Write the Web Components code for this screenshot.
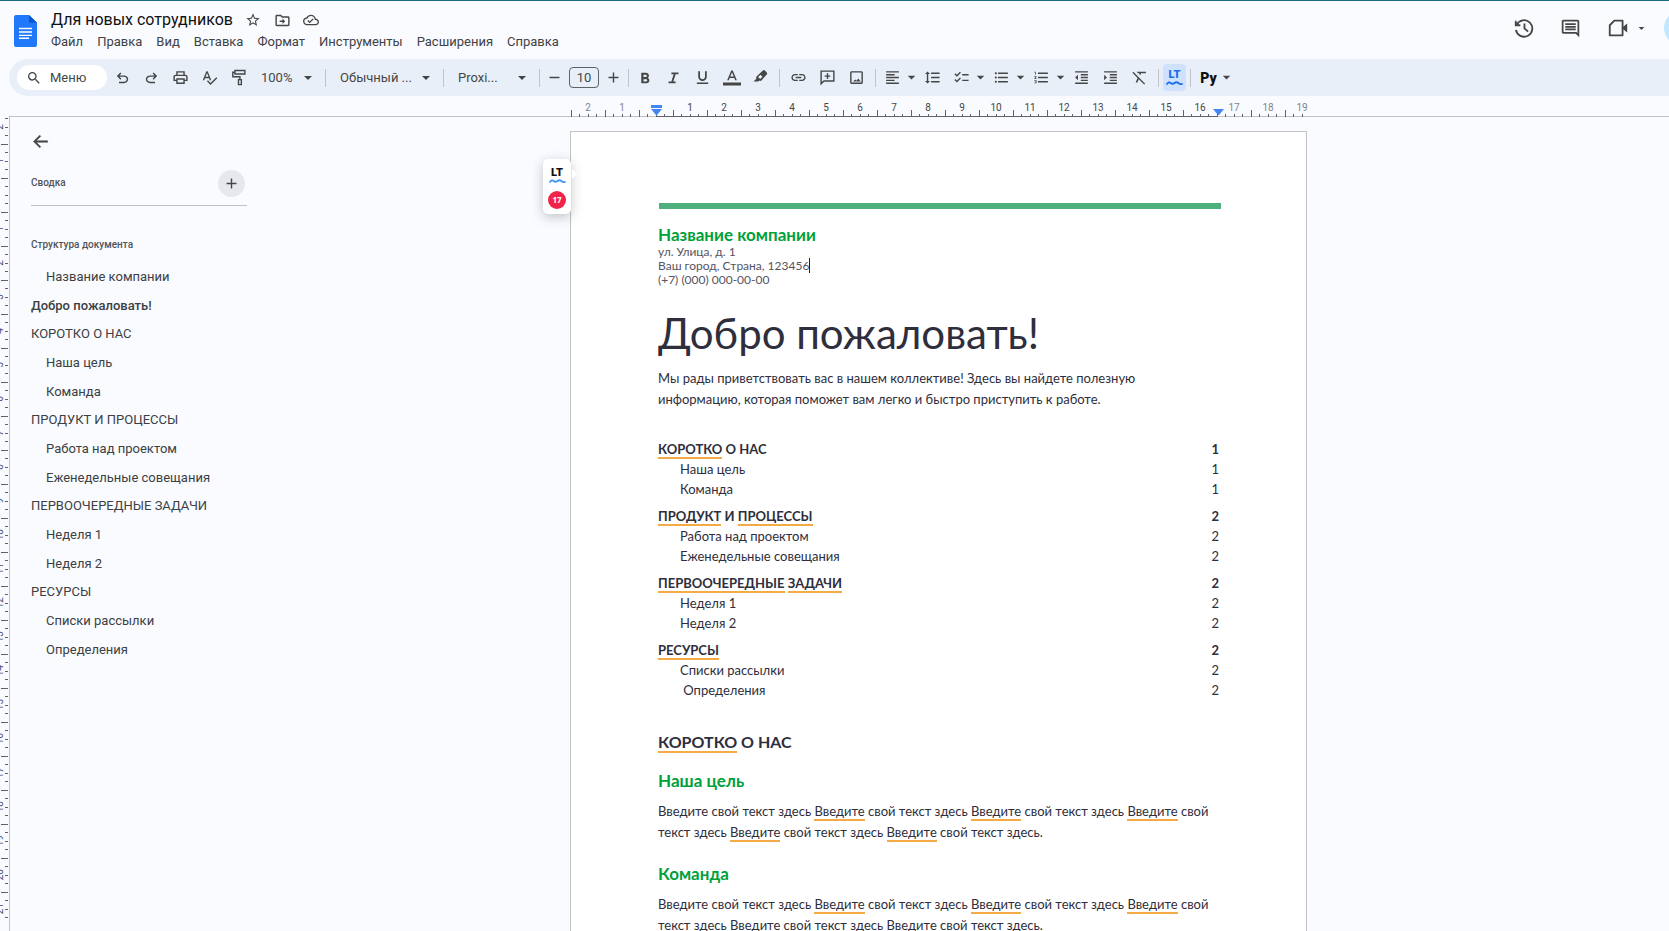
<!DOCTYPE html>
<html lang="ru">
<head>
<meta charset="utf-8">
<meta name="viewport" content="width=device-width, initial-scale=1">
<title>Для новых сотрудников</title>
<style>
  html, body { margin: 0; height: 100%; }
  body { background: #f9fbff; color: #444746; font: 13px/16px Roboto, sans-serif; overflow: hidden; }
</style>
</head>
<body>
<docs-app></docs-app>
<script>
const icons = {
  search: '<path d="M15.5 14h-.79l-.28-.27A6.47 6.47 0 0 0 16 9.5 6.5 6.5 0 1 0 9.5 16c1.61 0 3.09-.59 4.23-1.57l.27.28v.79l5 4.99L20.49 19l-4.99-5zm-6 0C7.01 14 5 11.99 5 9.5S7.01 5 9.5 5 14 7.01 14 9.5 11.99 14 9.5 14z"/>',
  star: '<path d="M22 9.24l-7.19-.62L12 2 9.19 8.63 2 9.24l5.46 4.73L5.82 21 12 17.27 18.18 21l-1.63-7.03L22 9.24zM12 15.4l-3.76 2.27 1-4.28-3.32-2.88 4.38-.38L12 6.1l1.71 4.04 4.38.38-3.32 2.88 1 4.28L12 15.4z"/>',
  move: '<path d="M20 6h-8l-2-2H4c-1.1 0-2 .9-2 2v12c0 1.1.9 2 2 2h16c1.1 0 2-.9 2-2V8c0-1.1-.9-2-2-2zm0 12H4V6h5.17l2 2H20v10z"/><path d="M8 12h4v-2.8l3.8 3.8-3.8 3.8V14H8z"/>',
  cloud: '<path d="M19.35 10.04C18.67 6.59 15.64 4 12 4 9.11 4 6.6 5.64 5.35 8.04 2.34 8.36 0 10.91 0 14c0 3.31 2.69 6 6 6h13c2.76 0 5-2.24 5-5 0-2.64-2.05-4.78-4.65-4.96zM19 18H6c-2.21 0-4-1.79-4-4 0-2.05 1.53-3.76 3.56-3.97l1.07-.11.5-.95C8.08 7.14 9.94 6 12 6c2.62 0 4.88 1.86 5.39 4.43l.3 1.5 1.53.11c1.56.1 2.78 1.41 2.78 2.96 0 1.65-1.35 3-3 3zm-9-3.82l-2.09-2.09L6.5 13.5 10 17l6.01-6.01-1.41-1.41z"/>',
  undo: '<path d="M7 20v-2h7.1q1.6 0 2.7-1t1.2-2.5-1.2-2.5-2.7-1H7.8l2.6 2.6L9 15l-5-5 5-5 1.4 1.4L7.8 9h6.3q2.4 0 4.2 1.6T20 14.5t-1.7 3.9T14.1 20z"/>',
  redo: '<path d="M17 20v-2H9.900q-1.600 0-2.700-1T6 14.500t1.200-2.500 2.700-1h6.300l-2.600 2.600L15 15l5-5-5-5-1.400 1.400L16.200 9H9.900q-2.400 0-4.200 1.600T4 14.500t1.700 3.900T9.900 20z"/>',
  print: '<path d="M19 8h-1V3H6v5H5c-1.66 0-3 1.34-3 3v6h4v4h12v-4h4v-6c0-1.66-1.34-3-3-3zM8 5h8v3H8V5zm8 12v2H8v-4h8v2zm2-2v-2H6v2H4v-4c0-.55.45-1 1-1h14c.55 0 1 .45 1 1v4h-2z"/>',
  spell: '<path d="M12.45 16h2.09L9.43 3H7.57L2.46 16h2.09l1.12-3h5.64l1.14 3zm-6.02-5L8.5 5.48 10.57 11H6.43zm15.16.59l-8.09 8.09L9.83 16l-1.41 1.41 5.09 5.09L23 13l-1.41-1.41z"/>',
  paint: '<g fill="none" stroke="currentColor" stroke-width="2"><path d="M7 2h14v5H7zM7 4.500H4V11h10v4"/><path d="M12 15h4v7h-4z"/></g>',
  minus: '<path d="M5 11h14v2H5z"/>',
  plus: '<path d="M19 13h-6v6h-2v-6H5v-2h6V5h2v6h6z"/>',
  bold: '<path d="M15.600 11.790c.97-.67 1.650-1.770 1.650-2.790 0-2.260-1.750-4-4-4H7v14h7.040c2.090 0 3.710-1.700 3.710-3.790 0-1.520-.86-2.820-2.150-3.420zM10 7.500h3c.83 0 1.500.67 1.500 1.500s-.67 1.500-1.500 1.500h-3v-3zm3.500 9H10v-3h3.500c.83 0 1.500.67 1.500 1.500s-.67 1.500-1.500 1.500z"/>',
  italic: '<path d="M9 5v2.500h3.200L9 17.500H5V20h10v-2.500h-3.200l3.200-10H19V5z"/>',
  underline: '<path d="M12 17c3.31 0 6-2.69 6-6V3h-2.500v8c0 1.930-1.570 3.500-3.500 3.500S8.500 12.930 8.500 11V3H6v8c0 3.310 2.690 6 6 6zm-8 2v2h16v-2H4z"/>',
  color: '<path d="M11 2L5.500 15h2.250l1.120-3h6.250l1.120 3h2.250L13 2h-2zm-1.380 8L12 4.670 14.380 10H9.620zM0 18h24v4H0z"/>',
  marker: '<path d="M20.800 4.800l-2.600-2.600a2 2 0 0 0-2.800 0l-9 8.400c-.6.6-.7 1.300-.4 2l.4.900-4.300 4.300H9l1.500-1.500.8.400c.7.300 1.500.2 2-.4l7.500-8.700a2 2 0 0 0 0-2.800zM11.600 14.200l-3-3 3.400-3.200 2.800 2.800z" fill-rule="evenodd"/>',
  link: '<path d="M3.900 12c0-1.710 1.390-3.100 3.100-3.100h4V7H7c-2.760 0-5 2.240-5 5s2.240 5 5 5h4v-1.900H7c-1.710 0-3.100-1.390-3.100-3.100zM8 13h8v-2H8v2zm9-6h-4v1.900h4c1.710 0 3.100 1.390 3.100 3.100s-1.390 3.100-3.100 3.100h-4V17h4c2.760 0 5-2.240 5-5s-2.240-5-5-5z"/>',
  addcomment: '<path fill="none" stroke="currentColor" stroke-width="2" d="M3 3h18v14H7l-4 4zM12 6v8M8 10h8"/>',
  image: '<path d="M19 5v14H5V5h14m0-2H5c-1.1 0-2 .9-2 2v14c0 1.1.9 2 2 2h14c1.1 0 2-.9 2-2V5c0-1.1-.9-2-2-2zm-4.500 10.500l-2.500 3-1.800-1.600L7 17.500h11z"/>',
  align: '<path d="M15 15H3v2h12v-2zm0-8H3v2h12V7zM3 13h18v-2H3v2zm0 8h18v-2H3v2zM3 3v2h18V3H3z"/>',
  spacing: '<path d="M6 7h2.500L5 3.500 1.500 7H4v10H1.500L5 20.500 8.500 17H6V7zm4-2v2h12V5H10zm0 14h12v-2H10v2zm0-6h12v-2H10v2z"/>',
  check: '<path d="M22 7h-9v2h9V7zm0 8h-9v2h9v-2zM5.540 11L2 7.460l1.410-1.410 2.120 2.120 4.240-4.240 1.410 1.410L5.540 11zm0 8L2 15.460l1.410-1.410 2.120 2.120 4.240-4.240 1.410 1.410L5.540 19z"/>',
  bullets: '<path d="M4 10.500c-.83 0-1.500.67-1.500 1.500s.67 1.500 1.500 1.500 1.500-.67 1.500-1.500-.67-1.500-1.500-1.500zm0-6c-.83 0-1.500.67-1.500 1.500S3.170 7.500 4 7.500 5.500 6.830 5.500 6 4.830 4.500 4 4.500zm0 12c-.83 0-1.500.68-1.500 1.500s.68 1.500 1.500 1.500 1.500-.68 1.500-1.500-.67-1.500-1.500-1.500zM7 19h14v-2H7v2zm0-6h14v-2H7v2zm0-8v2h14V5H7z"/>',
  numbers: '<path d="M2 17h2v.5H3v1h1v.5H2v1h3v-4H2v1zm1-9h1V4H2v1h1v3zm-1 3h1.800L2 13.100v.9h3v-1H3.200L5 10.900V10H2v1zm5-6v2h14V5H7zm0 14h14v-2H7v2zm0-6h14v-2H7v2z"/>',
  outdent: '<path d="M11 17h10v-2H11v2zm-8-5l4 4V8l-4 4zm0 9h18v-2H3v2zM3 3v2h18V3H3zm8 6h10V7H11v2zm0 4h10v-2H11v2z"/>',
  indent: '<path d="M3 21h18v-2H3v2zM3 8v8l4-4-4-4zm8 9h10v-2H11v2zM3 3v2h18V3H3zm8 6h10V7H11v2zm0 4h10v-2H11v2z"/>',
  clear: '<path d="M3.300 4L2 5.300l7.300 7.300L6.500 19H9l2-4.700 7.700 7.700 1.300-1.300zM8 4l2 2h2l-.5 1.200 1.500 1.600L14.200 6H21V4z"/>',
  history: '<path fill="none" stroke="currentColor" stroke-width="2" d="M3 4v5h5M4 8.500A9 9 0 1 1 3.200 14M12.500 7v5.500l4 3.500"/>',
  comment: '<path d="M22 4c0-1.1-.9-2-2-2H4c-1.100 0-2 .9-2 2v12c0 1.100.9 2 2 2h14l4 4zM20 4v13.170L18.830 16H4V4h16zM6 12h12v2H6zm0-3h12v2H6zm0-3h12v2H6z"/>',
  video: '<path fill="none" stroke="currentColor" stroke-width="2" stroke-linejoin="round" d="M8 4h9v16H3V9z"/><path d="M16 12l6-5v10z"/>',
  back: '<path stroke="currentColor" stroke-width=".6" d="M21 11H6.800l5.600-5.600L11 4l-8 8 8 8 1.400-1.400L6.800 13H21z"/>',
  caret: '<path d="M2 7h20L12 17z"/>'
};

const define = (name, markup, setup) => customElements.define(name, class extends HTMLElement {
  connectedCallback() {
    if (this.shadowRoot) return;
    const template = document.createElement('template');
    template.innerHTML = typeof markup === 'function' ? markup(this) : markup;
    this.attachShadow({ mode: 'open' }).append(template.content.cloneNode(true));
  }
});

define('ui-icon', el => `
  <style>:host{display:inline-flex;flex:none} svg{display:block;fill:currentColor}</style>
  <svg width="${el.getAttribute('size') || 17}" height="${el.getAttribute('size') || 17}" viewBox="0 0 24 24" aria-hidden="true">${icons[el.getAttribute('name')]}</svg>`);

define('tool-button', el => `
  <style>
    :host{display:block;flex:none}
    button{display:flex;align-items:center;justify-content:center;width:29px;height:27px;padding:0;border:0;border-radius:4px;background:none;color:inherit}
    :host([narrow]) button{width:11px;justify-content:flex-start}
  </style>
  <button type="button" aria-label="${el.getAttribute('label')}"><ui-icon name="${el.getAttribute('icon')}" size="${el.getAttribute('size') || 17}"></ui-icon></button>`);

define('lt-mark', `
  <style>
    :host{display:flex;flex-direction:column;align-items:center;gap:1px;font:900 11px/10px Roboto,sans-serif}
    svg{color:var(--wave,currentColor);display:block}
  </style>
  <span>LT</span>
  <svg width="17" height="4" viewBox="0 0 17 4" aria-hidden="true"><path fill="none" stroke="currentColor" stroke-width="1.800" stroke-linecap="round" d="M1 3q1.800-2.600 3.700-1t3.800 0 3.800 0 3.700 1"/></svg>`);

define('app-header', `
  <style>
    :host{display:flex;align-items:flex-start;height:58px;border-top:1px solid #1f6b7d;overflow:hidden}
    .logo{flex:none;margin:14px 14px 0}
    .names{flex:1;padding-top:9px;min-width:0}
    .title{display:flex;align-items:center;height:20px}
    h1{margin:0 6px 0 0;font:400 16px/20px Roboto,sans-serif;color:#111}
    .title button,.actions button{display:flex;align-items:center;justify-content:center;border:0;padding:0;background:none;color:#444746}
    .title button{width:29px;height:20px}
    nav{display:flex;gap:14px;margin-top:3px}
    nav button{border:0;padding:0;background:none;font:400 13px/18px Roboto,sans-serif;color:#3f4245}
    .actions{display:flex;align-items:center;height:54px;margin-right:-29px}
    .actions button{width:46px;height:32px}
    .actions .meet{width:64px;gap:9px;padding-left:2px}
    .avatar{width:34px;height:34px;border-radius:50%;background:#c2e7ff;margin-left:7px}
  </style>
  <svg class="logo" width="23" height="32" viewBox="0 0 23 33" preserveAspectRatio="none" aria-hidden="true">
    <path fill="#2079fb" d="M2 0h13l8 8v23a2 2 0 0 1-2 2H2a2 2 0 0 1-2-2V2a2 2 0 0 1 2-2z"/>
    <path fill="#0c57cc" d="M15 0l8 8h-8z"/>
    <path stroke="#fff" stroke-width="1.500" d="M5 14h13M5 17.500h13M5 21h13M5 24h10" fill="none"/>
  </svg>
  <div class="names">
    <div class="title">
      <h1>Для новых сотрудников</h1>
      <button type="button" aria-label="Пометить"><ui-icon name="star" size="16"></ui-icon></button>
      <button type="button" aria-label="Переместить"><ui-icon name="move" size="17"></ui-icon></button>
      <button type="button" aria-label="Сохранено"><ui-icon name="cloud" size="16"></ui-icon></button>
    </div>
    <nav>
      <button type="button">Файл</button><button type="button">Правка</button><button type="button">Вид</button><button type="button">Вставка</button><button type="button">Формат</button><button type="button">Инструменты</button><button type="button">Расширения</button><button type="button">Справка</button>
    </nav>
  </div>
  <div class="actions">
    <button type="button" aria-label="История"><ui-icon name="history" size="22"></ui-icon></button>
    <button type="button" aria-label="Комментарии"><ui-icon name="comment" size="21"></ui-icon></button>
    <button type="button" class="meet" aria-label="Видеовстреча"><ui-icon name="video" size="22"></ui-icon><ui-icon name="caret" size="7"></ui-icon></button>
    <span class="avatar"></span>
  </div>`);

define('tool-bar', `
  <style>
    :host{display:flex;align-items:center;height:37px;margin-left:9px;padding-left:8px;border-radius:19px 0 0 19px;background:#e9eff9;overflow:hidden;color:#444746}
    .search{display:flex;align-items:center;flex:none;gap:8px;width:81px;height:25px;padding-left:9px;margin-right:1px;border-radius:13px;background:#fff}
    input{font:400 13px/16px Roboto,sans-serif;color:#444746;padding:0;border:0;background:none;outline:0;min-width:0}
    .search input{width:50px}
    input::placeholder{color:#444746;opacity:1}
    select{flex:none;appearance:none;height:27px;padding:0;border:0;border-radius:4px;outline:0;font:400 13px/16px Roboto,sans-serif;color:#444746;
      background:url("data:image/svg+xml,%3Csvg xmlns='http://www.w3.org/2000/svg' width='8' height='4'%3E%3Cpath d='M0 0h8L4 4z' fill='%23444746'/%3E%3C/svg%3E") no-repeat right 13px center}
    .zoom{width:72px;padding-left:8px;background-position-x:right 11px}
    .style{width:117px;padding-left:14px}
    .font{width:95px;padding-left:14px}
    i{flex:none;width:1px;height:18px;background:#c0c3c7}
    .gap{margin:0 4px}
    .tight{margin-right:1px}
    .wide{margin:0 2px 0 4px}
    .size{width:28px;height:19px;border:1px solid #5f6368;border-radius:4px;text-align:center}
    .lt{display:flex;align-items:center;justify-content:center;flex:none;width:23px;height:27px;padding:0;border:0;border-radius:4px;background:#d0e1fd;color:#1a6fe8}
    .py{flex:none;border:0;padding:0;background:none;width:27px;font:900 14px/16px Roboto,sans-serif;color:#111}
  </style>
  <label class="search"><ui-icon name="search" size="16"></ui-icon><input type="text" placeholder="Меню" aria-label="Меню"></label>
  <tool-button icon="undo" label="Отменить"></tool-button>
  <tool-button icon="redo" label="Повторить"></tool-button>
  <tool-button icon="print" label="Печать"></tool-button>
  <tool-button icon="spell" label="Правописание"></tool-button>
  <tool-button icon="paint" label="Копировать формат"></tool-button>
  <select class="zoom" aria-label="Масштаб"><option>100%</option></select><i></i>
  <select class="style" aria-label="Стиль"><option>Обычный ...</option></select><i></i>
  <select class="font" aria-label="Шрифт"><option>Proxi...</option></select><i></i>
  <tool-button icon="minus" label="Уменьшить"></tool-button>
  <input class="size" value="10" aria-label="Размер шрифта">
  <tool-button icon="plus" label="Увеличить"></tool-button>
  <i class="tight"></i>
  <tool-button icon="bold" label="Полужирный" size="18"></tool-button>
  <tool-button icon="italic" label="Курсив"></tool-button>
  <tool-button icon="underline" label="Подчеркнутый"></tool-button>
  <tool-button icon="color" label="Цвет текста" size="18"></tool-button>
  <tool-button icon="marker" label="Цвет выделения"></tool-button>
  <i class="gap"></i>
  <tool-button icon="link" label="Ссылка"></tool-button>
  <tool-button icon="addcomment" label="Комментарий"></tool-button>
  <tool-button icon="image" label="Изображение"></tool-button>
  <i class="wide"></i>
  <tool-button icon="align" label="Выравнивание"></tool-button>
  <tool-button icon="caret" label="Варианты" size="9" narrow></tool-button>
  <tool-button icon="spacing" label="Интервал"></tool-button>
  <tool-button icon="check" label="Контрольный список"></tool-button>
  <tool-button icon="caret" label="Варианты" size="9" narrow></tool-button>
  <tool-button icon="bullets" label="Маркированный список"></tool-button>
  <tool-button icon="caret" label="Варианты" size="9" narrow></tool-button>
  <tool-button icon="numbers" label="Нумерованный список"></tool-button>
  <tool-button icon="caret" label="Варианты" size="9" narrow></tool-button>
  <tool-button icon="outdent" label="Уменьшить отступ"></tool-button>
  <tool-button icon="indent" label="Увеличить отступ"></tool-button>
  <tool-button icon="clear" label="Очистить форматирование"></tool-button>
  <i class="gap"></i>
  <button type="button" class="lt" aria-label="LanguageTool"><lt-mark></lt-mark></button>
  <i class="gap"></i>
  <button type="button" class="py">Py</button>
  <tool-button icon="caret" label="Варианты" size="9" narrow></tool-button>`);

define('page-ruler', () => {
  const cells = Array.from({ length: 22 }, (_, n) => n - 2).map(n =>
    `<div class="${n < 0 || n > 16 ? 'out' : ''}"><span>${n ? Math.abs(n) : ''}</span><svg width="34" height="7" aria-hidden="true"><path d="M0 0h1v7H0zM8 4h1v3H8zM17 4h1v3h-1z${n < 19 ? 'M25 4h1v3h-1z' : ''}"/></svg></div>`).join('');
  return `
  <style>
    :host{display:grid;grid-template-columns:255px 1fr 56px;margin-left:9px;height:21px;background:linear-gradient(#c0c2c4,#c0c2c4) left bottom/100% 1px no-repeat}
    .track{grid-column:2;justify-self:center;position:relative;width:737px;height:21px;background:linear-gradient(#5f6368,#5f6368) 87px bottom/561px 1px no-repeat}
    .cells{display:flex;padding-left:1px}
    .cells div{flex:none;width:34px;height:21px;display:flex;flex-direction:column;justify-content:flex-end;text-align:center;font:400 10px/12px Roboto,sans-serif;color:#444746}
    .cells .out{color:#80868b}
    .cells svg{display:block;fill:#5f6368;margin-top:-4px}
    .cells span{height:12px}
    .mark{position:absolute;top:9px}
    .first{left:81px}
    .last{left:643px}
  </style>
  <div class="track"><div class="cells">${cells}</div>
    <svg class="mark first" width="11" height="10" aria-hidden="true"><path fill="#4285f4" d="M0 0h11v3H0zM0 4h11L6 10H5z"/></svg>
    <svg class="mark last" width="11" height="10" aria-hidden="true"><path fill="#4285f4" d="M0 4h11L6 10H5z"/></svg>
  </div>`;
});

define('side-ruler', () => {
  const cells = Array.from({ length: 24 }, (_, n) => n - 2).map(n =>
    `<div><svg width="9" height="34" aria-hidden="true"><path d="M1 0h7v1H1zM5 8h3v1H5zM5 17h3v1H5zM5 25h3v1H5z"/></svg><span>${n ? Math.abs(n) : ''}</span></div>`).join('');
  return `
  <style>
    :host{display:block;flex:none;width:9px;overflow:hidden}
    .cells{margin-top:-7px}
    .cells div{display:grid;width:9px;height:34px;align-items:center}
    svg,span{grid-area:1/1}
    svg{display:block;fill:#5f6368}
    span{writing-mode:vertical-rl;transform:rotate(180deg);margin-left:-6px;width:12px;text-align:center;font:400 10px/12px Roboto,sans-serif;color:#4a4f7a}
  </style><div class="cells">${cells}</div>`;
});

define('outline-item', `
  <style>
    :host{display:block}
    a{display:block;color:#3c4043;text-decoration:none;font:400 13px/29px Roboto,sans-serif}
    :host([level="2"]) a{padding-left:15px}
    :host([level="1"]) a{line-height:28px}
    :host([level="0"]) a{font-weight:500}
  </style><a href="#"><slot></slot></a>`);

define('outline-panel', `
  <style>
    :host{display:block;flex:none;box-sizing:border-box;width:255px;padding:12px 17px 0 21px;border-left:1px solid #c0c2c4;color:#444746}
    button{display:flex;align-items:center;justify-content:center;border:0;padding:0;background:none;color:inherit}
    .back{width:18px;height:24px}
    .summary{display:flex;align-items:center;justify-content:space-between;height:44px;padding:5px 2px 0 0;border-bottom:1px solid #bdc1c6;margin-top:3px}
    .add{width:27px;height:27px;border-radius:50%;background:#e6e8ec}
    h2{margin:0;font:500 10px/16px Roboto,sans-serif;color:#50545a}
    .structure{margin:31px 0 9px}
  </style>
  <button type="button" class="back" aria-label="Закрыть"><ui-icon name="back" size="19"></ui-icon></button>
  <div class="summary"><h2>Сводка</h2><button type="button" class="add" aria-label="Добавить"><ui-icon name="plus" size="17"></ui-icon></button></div>
  <h2 class="structure">Структура документа</h2>
  <nav>
    <outline-item level="2">Название компании</outline-item>
    <outline-item level="0">Добро пожаловать!</outline-item>
    <outline-item level="1">КОРОТКО О НАС</outline-item>
    <outline-item level="2">Наша цель</outline-item>
    <outline-item level="2">Команда</outline-item>
    <outline-item level="1">ПРОДУКТ И ПРОЦЕССЫ</outline-item>
    <outline-item level="2">Работа над проектом</outline-item>
    <outline-item level="2">Еженедельные совещания</outline-item>
    <outline-item level="1">ПЕРВООЧЕРЕДНЫЕ ЗАДАЧИ</outline-item>
    <outline-item level="2">Неделя 1</outline-item>
    <outline-item level="2">Неделя 2</outline-item>
    <outline-item level="1">РЕСУРСЫ</outline-item>
    <outline-item level="2">Списки рассылки</outline-item>
    <outline-item level="2">Определения</outline-item>
  </nav>`);

define('lt-widget', `
  <style>
    :host{display:flex;flex-direction:column;align-items:center;box-sizing:border-box;width:28px;height:55px;padding-top:9px;border-radius:5px;background:#fff;box-shadow:0 3px 12px rgba(60,64,67,.3);color:#111;--wave:#3d96f7}
    b{margin-top:8px;width:18px;height:18px;border-radius:50%;background:#f0234a;color:#fff;text-align:center;font:700 8px/18px "Open Sans",sans-serif}
    :host::after{content:"";position:absolute;left:29px;top:10px;border:5px solid transparent;border-left-color:#fff;border-right:0}
  </style><lt-mark></lt-mark><b>17</b>`);

define('toc-row', el => `
  <style>
    :host{display:flex;justify-content:space-between;line-height:20px;padding-left:22px}
    :host([head]){padding-left:0;font-weight:700}
    :host([head]:not(:first-child)){margin-top:7px}
  </style><span><slot></slot></span><span>${el.getAttribute('page')}</span>`);

define('doc-page', `
  <style>
    :host{display:block;position:relative;box-sizing:border-box;width:737px;min-height:1042px;margin:14px 0 40px;padding:71px 87px 0 87px;border:1px solid #c0c2c4;background:#fff;color:#2e2e3c;font:400 13px/21px Lato,sans-serif}
    lt-widget{position:absolute;left:-28px;top:27px}
    hr{height:6px;margin:0 -2px 0 1px;border:0;background:#4eb07c}
    h1,h2,h3,p,address{margin:0}
    h3{font:700 17px/20px Lato,sans-serif;color:#00a13a}
    h2{font:700 16px/20px Lato,sans-serif}
    .company{margin-top:16px}
    address{font:400 12px/14px Lato,sans-serif;color:#55555f}
    .cursor{border-right:1px solid #222}
    h1{font:400 42px/52px Lato,sans-serif;margin-top:20px}
    .intro{margin-top:9px}
    .toc{margin:29px 0 32px}
    .goal{margin-top:19px}
    .team{margin-top:21px}
    .body{margin-top:10px}
    mark{background:none;color:inherit;border-bottom:2px solid #f5ab45}
  </style>
  <lt-widget></lt-widget>
  <hr>
  <h3 class="company">Название компании</h3>
  <address>ул. Улица, д. 1<br><span class="cursor">Ваш город, Страна, 123456</span><br>(+7) (000) 000-00-00</address>
  <h1>Добро пожаловать!</h1>
  <p class="intro">Мы рады приветствовать вас в нашем коллективе! Здесь вы найдете полезную<br>информацию, которая поможет вам легко и быстро приступить к работе.</p>
  <div class="toc">
    <toc-row head page="1"><mark>КОРОТКО</mark> О НАС</toc-row>
    <toc-row page="1">Наша цель</toc-row>
    <toc-row page="1">Команда</toc-row>
    <toc-row head page="2"><mark>ПРОДУКТ</mark> И <mark>ПРОЦЕССЫ</mark></toc-row>
    <toc-row page="2">Работа над проектом</toc-row>
    <toc-row page="2">Еженедельные совещания</toc-row>
    <toc-row head page="2"><mark>ПЕРВООЧЕРЕДНЫЕ</mark> <mark>ЗАДАЧИ</mark></toc-row>
    <toc-row page="2">Неделя 1</toc-row>
    <toc-row page="2">Неделя 2</toc-row>
    <toc-row head page="2"><mark>РЕСУРСЫ</mark></toc-row>
    <toc-row page="2">Списки рассылки</toc-row>
    <toc-row page="2">&nbsp;Определения</toc-row>
  </div>
  <h2><mark>КОРОТКО</mark> О НАС</h2>
  <h3 class="goal">Наша цель</h3>
  <p class="body">Введите свой текст здесь <mark>Введите</mark> свой текст здесь <mark>Введите</mark> свой текст здесь <mark>Введите</mark> свой текст здесь <mark>Введите</mark> свой текст здесь <mark>Введите</mark> свой текст здесь.</p>
  <h3 class="team">Команда</h3>
  <p class="body">Введите свой текст здесь <mark>Введите</mark> свой текст здесь <mark>Введите</mark> свой текст здесь <mark>Введите</mark> свой текст здесь Введите свой текст здесь Введите свой текст здесь.</p>`);

define('docs-app', `
  <style>
    :host{display:flex;flex-direction:column;height:100vh;overflow:hidden}
    app-header,tool-bar,page-ruler{flex:none}
    .body{display:flex;flex:1;min-height:0;overflow:hidden}
    main{flex:1;display:flex;justify-content:center;align-items:flex-start;padding-right:56px;min-width:0}
    doc-page{flex:none}
  </style>
  <app-header></app-header>
  <tool-bar></tool-bar>
  <page-ruler></page-ruler>
  <div class="body"><side-ruler></side-ruler><outline-panel></outline-panel><main><doc-page></doc-page></main></div>`);
</script>
</body>
</html>
